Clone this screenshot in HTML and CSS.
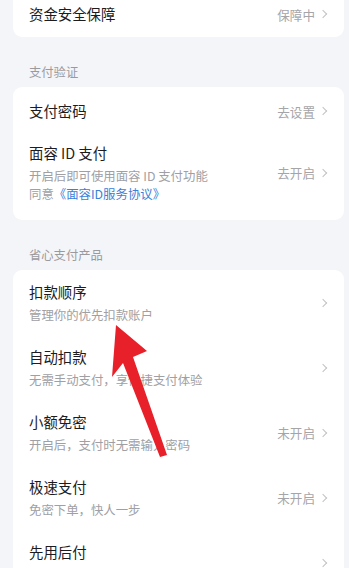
FILE: index.html
```html
<!DOCTYPE html>
<html lang="zh-CN">
<head>
  <meta charset="UTF-8" />
  <meta name="viewport" content="width=device-width, initial-scale=1.0" />
  <title>支付设置</title>
  <link rel="stylesheet" href="styles.css">
</head>
<body>
  <div class="page">
    <div class="card card-top">
      <div class="row row-single">
        <div class="row-main"><div class="title">资金安全保障</div></div>
        <div class="value">保障中</div><span class="chev"></span>
      </div>
    </div>

    <div class="section">支付验证</div>
    <div class="card">
      <div class="row row-single">
        <div class="row-main"><div class="title">支付密码</div></div>
        <div class="value">去设置</div><span class="chev"></span>
      </div>
      <div class="row row-face">
        <div class="row-main">
          <div class="title">面容 ID 支付</div>
          <div class="sub">开启后即可使用面容 ID 支付功能</div>
          <div class="sub">同意<span class="link">《面容ID服务协议》</span></div>
        </div>
        <div class="value">去开启</div><span class="chev"></span>
      </div>
    </div>

    <div class="section">省心支付产品</div>
    <div class="card">
      <div class="row">
        <div class="row-main">
          <div class="title">扣款顺序</div>
          <div class="sub">管理你的优先扣款账户</div>
        </div>
        <span class="chev"></span>
      </div>
      <div class="row">
        <div class="row-main">
          <div class="title">自动扣款</div>
          <div class="sub">无需手动支付，享快捷支付体验</div>
        </div>
        <span class="chev"></span>
      </div>
      <div class="row">
        <div class="row-main">
          <div class="title">小额免密</div>
          <div class="sub">开启后，支付时无需输入密码</div>
        </div>
        <div class="value">未开启</div><span class="chev"></span>
      </div>
      <div class="row">
        <div class="row-main">
          <div class="title">极速支付</div>
          <div class="sub">免密下单，快人一步</div>
        </div>
        <div class="value">未开启</div><span class="chev"></span>
      </div>
      <div class="row">
        <div class="row-main">
          <div class="title">先用后付</div>
          <div class="sub"></div>
        </div>
        <span class="chev"></span>
      </div>
    </div>
  </div>

  <svg class="arrow" width="349" height="568" viewBox="0 0 349 568">
    <polygon points="116,325 147,351 133,357 167,455 160,457 123,363 112,377" fill="#e8202a" />
  </svg>
</body>
</html>
```

FILE: styles.css
```css
body {
  margin: 0;
  background: #f4f5f8;
  font-family: "Noto Sans CJK SC", "Noto Sans", sans-serif;
  overflow: hidden;
}
.page {
  padding: 0 5px 0 13px;
  margin-top: -10px;
}
.card {
  background: #fff;
  border-radius: 9px;
  overflow: hidden;
}
.card-top {
  border-top-left-radius: 0;
  border-top-right-radius: 0;
}
.section {
  padding: 25px 16px 5px;
  font-size: 12.3px;
  line-height: 20px;
  color: #9a9a9e;
}
.row {
  display: flex;
  align-items: center;
  padding: 11px 16px;
}
.row-single {
  padding: 13px 16px 12px;
}
.row-face {
  padding: 8px 16px 17px;
}
.row-main {
  flex: 1;
  min-width: 0;
}
.title {
  font-size: 14.4px;
  line-height: 22px;
  color: #1c1c1e;
}
.sub {
  font-size: 12.4px;
  line-height: 18px;
  min-height: 18px;
  color: #a0a0a4;
  margin-top: 3px;
}
.sub + .sub {
  margin-top: 0;
}
.link {
  color: #3a80d8;
}
.value {
  font-size: 12.6px;
  color: #a5a5a9;
  margin-right: 5px;
}
.chev {
  width: 5px;
  height: 5px;
  border-top: 1.2px solid #c2c2c6;
  border-right: 1.2px solid #c2c2c6;
  transform: rotate(45deg);
  margin-right: 2px;
}
.arrow {
  position: absolute;
  top: 0;
  left: 0;
}
```
